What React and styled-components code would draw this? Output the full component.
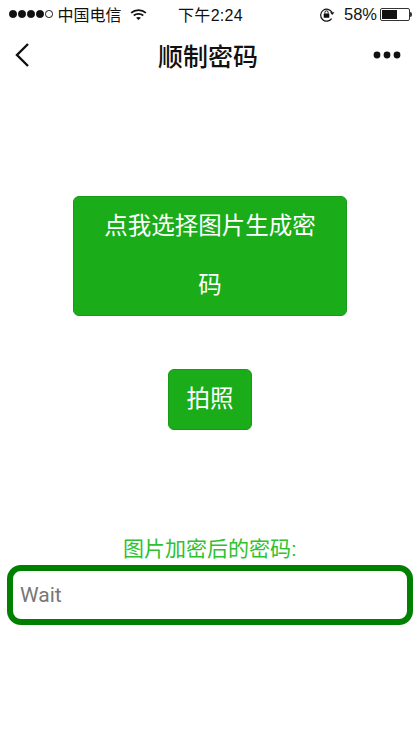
import React from "react";
import styled, { createGlobalStyle } from "styled-components";

const GlobalStyle = createGlobalStyle`
  html, body {
    margin: 0;
    padding: 0;
    background: #fff;
  }
  body {
    font-family: "Liberation Sans", "Noto Sans CJK SC", sans-serif;
  }
`;

const Page = styled.div`
  width: 420px;
  height: 746px;
  overflow: hidden;
  display: flex;
  flex-direction: column;
  align-items: center;
`;

const StatusBar = styled.div`
  width: 100%;
  height: 28px;
  box-sizing: border-box;
  padding: 0 8px 0 9px;
  display: flex;
  align-items: center;
  justify-content: space-between;
  font-size: 16px;
  color: #111;
`;

const StatusSide = styled.div`
  display: flex;
  align-items: center;
  flex: 1;
  justify-content: ${(p) => (p.$end ? "flex-end" : "flex-start")};
`;

const Signal = styled.div`
  display: flex;
  gap: 1.5px;
  margin-right: 5px;
`;

const Dot = styled.span`
  width: 7.5px;
  height: 7.5px;
  border-radius: 50%;
  box-sizing: border-box;
  border: 1px solid #111;
  background: ${(p) => (p.$empty ? "#fff" : "#111")};
`;

const Carrier = styled.span`
  margin-right: 8px;
`;

const Clock = styled.span`
  font-size: 16px;
  letter-spacing: 0.3px;
`;

const Percent = styled.span`
  font-size: 16.5px;
`;

const Battery = styled.div`
  display: flex;
  align-items: center;
  margin-left: 3px;
`;

const BatteryBody = styled.div`
  width: 30px;
  height: 13px;
  box-sizing: border-box;
  border: 1px solid #333;
  border-radius: 2px;
  padding: 1px;
`;

const BatteryLevel = styled.div`
  height: 100%;
  background: #111;
`;

const BatteryTip = styled.div`
  width: 2px;
  height: 5px;
  background: #333;
  border-radius: 0 2px 2px 0;
`;

const NavBar = styled.div`
  width: 100%;
  height: 53px;
  box-sizing: border-box;
  padding: 0 18px 0 14px;
  display: flex;
  align-items: center;
  justify-content: space-between;
`;

const NavSide = styled.div`
  flex: 1;
  display: flex;
  align-items: center;
  justify-content: ${(p) => (p.$end ? "flex-end" : "flex-start")};
`;

const NavTitle = styled.div`
  font-size: 25px;
  font-weight: 500;
  color: #111;
`;

const Content = styled.div`
  width: 100%;
  display: flex;
  flex-direction: column;
  align-items: center;
  padding-top: 115px;
`;

const ActionButton = styled.button`
  display: block;
  width: ${(p) => (p.$wide ? "274px" : "84px")};
  margin: 0 0 ${(p) => (p.$wide ? "53px" : "0")};
  padding: ${(p) => (p.$wide ? "0 28px" : "0")};
  box-sizing: border-box;
  background: #1aad19;
  border: 1px solid #179b16;
  border-radius: 6px;
  color: #fff;
  font-family: inherit;
  font-size: 23.5px;
  line-height: 59px;
`;

const ResultLabel = styled.div`
  margin-top: 106px;
  font-size: 21px;
  line-height: 26px;
  color: #2fc12f;
`;

const ResultInput = styled.input`
  display: block;
  width: 406px;
  height: 60px;
  margin-top: 3px;
  box-sizing: border-box;
  border: 6px solid #008000;
  border-radius: 14px;
  padding: 0 7px;
  outline: none;
  background: #fff;
  font-family: "Roboto", "Liberation Sans", sans-serif;
  font-size: 21px;
  color: #333;

  &::placeholder {
    color: #777;
    opacity: 1;
  }
`;

const WifiIcon = () => (
  <svg width="17" height="13" viewBox="0 0 18 13" fill="none" stroke="#111">
    <path d="M1.2 4.8C5.6 0.8 12.4 0.8 16.8 4.8" strokeWidth="1.9" />
    <path d="M4 7.6C6.8 5.2 11.2 5.2 14 7.6" strokeWidth="1.9" />
    <path d="M9 12.4 L6.4 9.9C7.9 8.8 10.1 8.8 11.6 9.9Z" fill="#111" stroke="none" />
  </svg>
);

const LockIcon = () => (
  <svg width="17" height="15" viewBox="0 0 17 15" fill="none" style={{ marginRight: 8 }}>
    <path d="M12.6 11.6A6 6 0 1 1 13 5.4" stroke="#111" strokeWidth="1.2" />
    <path d="M11 5.2h4.4L13.2 8z" fill="#111" />
    <rect x="4.7" y="6.6" width="5.6" height="4.2" rx="0.5" fill="#111" />
    <path d="M5.9 6.6V5.4a1.6 1.6 0 0 1 3.2 0v1.2" stroke="#111" strokeWidth="1" />
  </svg>
);

const BackIcon = () => (
  <svg width="16" height="26" viewBox="0 0 16 26" fill="none" stroke="#111" strokeWidth="2.4">
    <path d="M14 2 L3 13 L14 24" />
  </svg>
);

const MoreIcon = () => (
  <svg width="30" height="8" viewBox="0 0 30 8" fill="#111">
    <circle cx="5" cy="4" r="3.4" />
    <circle cx="15" cy="4" r="3.4" />
    <circle cx="25" cy="4" r="3.4" />
  </svg>
);

export default function App() {
  return (
    <Page>
      <GlobalStyle />
      <StatusBar>
        <StatusSide>
          <Signal>
            <Dot />
            <Dot />
            <Dot />
            <Dot />
            <Dot $empty />
          </Signal>
          <Carrier>中国电信</Carrier>
          <WifiIcon />
        </StatusSide>
        <Clock>下午2:24</Clock>
        <StatusSide $end>
          <LockIcon />
          <Percent>58%</Percent>
          <Battery>
            <BatteryBody>
              <BatteryLevel style={{ width: "58%" }} />
            </BatteryBody>
            <BatteryTip />
          </Battery>
        </StatusSide>
      </StatusBar>
      <NavBar>
        <NavSide>
          <BackIcon />
        </NavSide>
        <NavTitle>顺制密码</NavTitle>
        <NavSide $end>
          <MoreIcon />
        </NavSide>
      </NavBar>
      <Content>
        <ActionButton $wide>点我选择图片生成密码</ActionButton>
        <ActionButton>拍照</ActionButton>
        <ResultLabel>图片加密后的密码:</ResultLabel>
        <ResultInput placeholder="Wait" />
      </Content>
    </Page>
  );
}
